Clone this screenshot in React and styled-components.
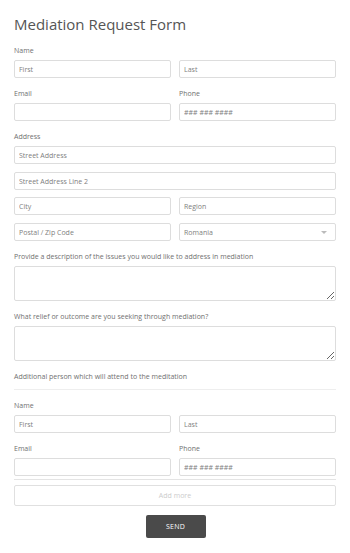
import React from 'react';
import styled, { createGlobalStyle } from 'styled-components';

const GlobalStyle = createGlobalStyle`
  html, body {
    margin: 0;
    padding: 0;
    background: #fff;
  }
  body {
    font-family: "Open Sans", "Liberation Sans", sans-serif;
    color: #707070;
  }
  * {
    box-sizing: border-box;
  }
`;

const Form = styled.form`
  width: 350px;
  padding: 14px;
  display: flex;
  flex-direction: column;
`;

const Title = styled.h1`
  margin: 0 0 12px 0;
  font-size: 15px;
  line-height: 20px;
  font-weight: 400;
  color: #555;
`;

const Field = styled.div`
  display: flex;
  flex-direction: column;
  margin-bottom: 11px;
`;

const Label = styled.label`
  display: block;
  font-size: 7px;
  line-height: 10px;
  height: 10px;
  margin-bottom: 4px;
  color: #707070;
  white-space: nowrap;
`;

const Row = styled.div`
  display: grid;
  grid-template-columns: 1fr 1fr;
  column-gap: 8px;
  margin-bottom: ${(p) => p.gap || 0}px;
`;

const Col = styled.div`
  display: flex;
  flex-direction: column;
`;

const Input = styled.input`
  width: 100%;
  height: 18px;
  padding: 0 4px;
  border: 1px solid #ddd;
  border-radius: 2px;
  font-family: inherit;
  font-size: 7px;
  color: #777;
  background: #fff;
  margin-bottom: ${(p) => p.gap || 0}px;
  outline: none;
  &::placeholder {
    color: #808080;
  }
`;

const SelectBox = styled.div`
  position: relative;
  height: 18px;
  border: 1px solid #ddd;
  border-radius: 2px;
  display: flex;
  align-items: center;
  padding: 0 4px;
  font-size: 7px;
  color: #808080;
`;

const Caret = styled.span`
  position: absolute;
  right: 8px;
  top: 7px;
  width: 0;
  height: 0;
  border-left: 3px solid transparent;
  border-right: 3px solid transparent;
  border-top: 3px solid #bbb;
`;

const TextArea = styled.textarea`
  width: 100%;
  height: 35px;
  border: 1px solid #ddd;
  border-radius: 2px;
  font-family: inherit;
  font-size: 7px;
  padding: 4px;
  display: block;
  outline: none;
`;

const SectionTitle = styled.div`
  font-size: 7px;
  line-height: 10px;
  color: #707070;
  padding: 0 0 7px 0;
  border-bottom: 1px solid #eee;
  margin-bottom: 11px;
`;

const Divider = styled.div`
  height: 0;
  border-top: 1px solid #e4e4e4;
  margin: 3px 0 5px 0;
`;

const AddMore = styled.button`
  height: 21px;
  width: 100%;
  border: 1px solid #e0e0e0;
  border-radius: 2px;
  background: #fff;
  font-family: inherit;
  font-size: 7px;
  color: #ccc;
  margin-bottom: 9px;
  cursor: pointer;
`;

const SendWrap = styled.div`
  display: flex;
  justify-content: center;
`;

const Send = styled.button`
  width: 60px;
  height: 23px;
  border: none;
  border-radius: 2px;
  background: #4a4a4a;
  color: #fff;
  font-family: inherit;
  font-size: 7px;
  letter-spacing: 0.2px;
  margin-left: 1px;
  cursor: pointer;
`;

const NamePhone = ({ gapAfter }) => (
  <>
    <Field>
      <Label>Name</Label>
      <Row>
        <Input placeholder="First" />
        <Input placeholder="Last" />
      </Row>
    </Field>
    <Row gap={gapAfter}>
      <Col>
        <Label>Email</Label>
        <Input />
      </Col>
      <Col>
        <Label>Phone</Label>
        <Input placeholder="### ### ####" />
      </Col>
    </Row>
  </>
);

export default function App() {
  return (
    <>
      <GlobalStyle />
      <Form onSubmit={(e) => e.preventDefault()}>
        <Title>Mediation Request Form</Title>
        <NamePhone gapAfter={11} />
        <Field>
          <Label>Address</Label>
          <Input placeholder="Street Address" gap={8} />
          <Input placeholder="Street Address Line 2" gap={7} />
          <Row>
            <Input placeholder="City" gap={8} />
            <Input placeholder="Region" gap={8} />
          </Row>
          <Row>
            <Input placeholder="Postal / Zip Code" />
            <SelectBox>
              Romania
              <Caret />
            </SelectBox>
          </Row>
        </Field>
        <Field>
          <Label>Provide a description of the issues you would like to address in mediation</Label>
          <TextArea />
        </Field>
        <Field>
          <Label>What relief or outcome are you seeking through mediation?</Label>
          <TextArea />
        </Field>
        <SectionTitle>Additional person which will attend to the meditation</SectionTitle>
        <NamePhone gapAfter={0} />
        <Divider />
        <AddMore type="button">Add more</AddMore>
        <SendWrap>
          <Send type="submit">SEND</Send>
        </SendWrap>
      </Form>
    </>
  );
}
